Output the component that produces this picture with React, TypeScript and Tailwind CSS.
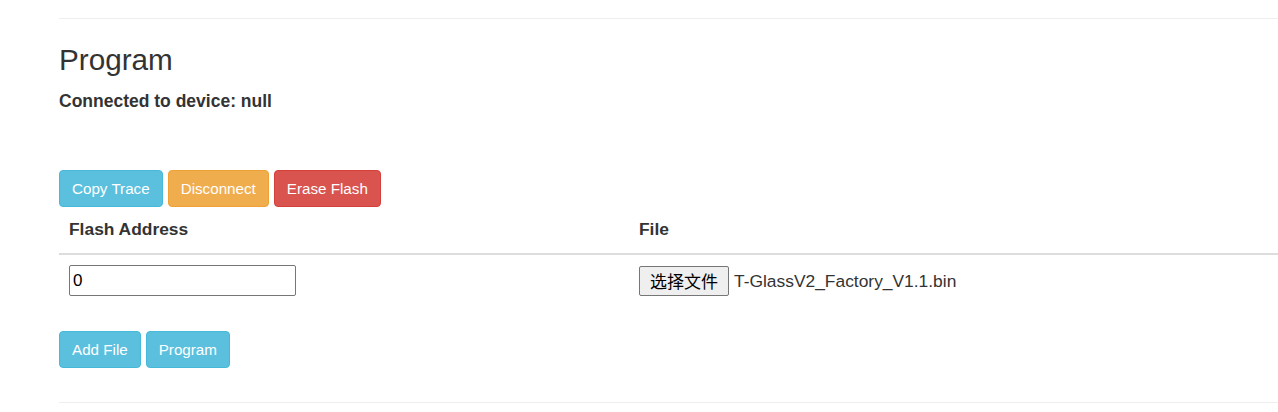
import React from "react";

const font = "font-['Liberation_Sans','Noto_Sans_CJK_SC',Arial,sans-serif]";

function Btn({ tone, children }: { tone: "info" | "warning" | "danger"; children: React.ReactNode }) {
  const tones = {
    info: "bg-[#5bc0de] border-[#46b8da]",
    warning: "bg-[#f0ad4e] border-[#eea236]",
    danger: "bg-[#d9534f] border-[#d43f3a]",
  };
  return (
    <button
      type="button"
      className={`h-[37px] px-[12px] border rounded-[4px] text-white text-[15.2px] leading-[20px] ${tones[tone]}`}
    >
      {children}
    </button>
  );
}

export default function App() {
  return (
    <div className={`min-h-[412px] bg-white pl-[59px] text-[#333] ${font}`}>
      <div className="pt-[18px]">
        <hr className="border-0 border-t border-[#eee]" />
      </div>

      {/* heading */}
      <h2 className="mt-[25px] text-[29.7px] leading-[32px] font-normal">Program</h2>
      <h5 className="mt-[13px] text-[17.5px] leading-[24px] font-bold">Connected to device: null</h5>

      {/* actions */}
      <div className="mt-[57px] flex gap-[5px]">
        <Btn tone="info">Copy Trace</Btn>
        <Btn tone="warning">Disconnect</Btn>
        <Btn tone="danger">Erase Flash</Btn>
      </div>

      {/* file table */}
      <div className="grid grid-cols-[570px_1fr] text-[17.4px]">
        <div className="px-[10px] pt-[10px] pb-[12px] leading-[24px] font-bold border-b-2 border-[#ddd]">
          Flash Address
        </div>
        <div className="px-[10px] pt-[10px] pb-[12px] leading-[24px] font-bold border-b-2 border-[#ddd]">
          File
        </div>

        <div className="px-[10px] pt-[10px]">
          <input
            type="text"
            defaultValue="0"
            className="w-[227px] h-[31px] border border-[#767676] rounded-[2px] pl-[3px] text-[17px] text-black outline-none"
          />
        </div>
        <div className="px-[10px] pt-[10px] flex items-center h-[41px]">
          <button
            type="button"
            className="h-[30px] px-[10px] border border-[#767676] rounded-[2px] bg-[#efefef] text-black text-[17px] leading-[20px] font-['Noto_Sans_CJK_SC',sans-serif]"
          >
            选择文件
          </button>
          <span className="ml-[5px] leading-[24px]">T-GlassV2_Factory_V1.1.bin</span>
        </div>
      </div>

      <div className="mt-[35px] flex gap-[5px]">
        <Btn tone="info">Add File</Btn>
        <Btn tone="info">Program</Btn>
      </div>

      <div className="mt-[34px]">
        <hr className="border-0 border-t border-[#eee]" />
      </div>
    </div>
  );
}
